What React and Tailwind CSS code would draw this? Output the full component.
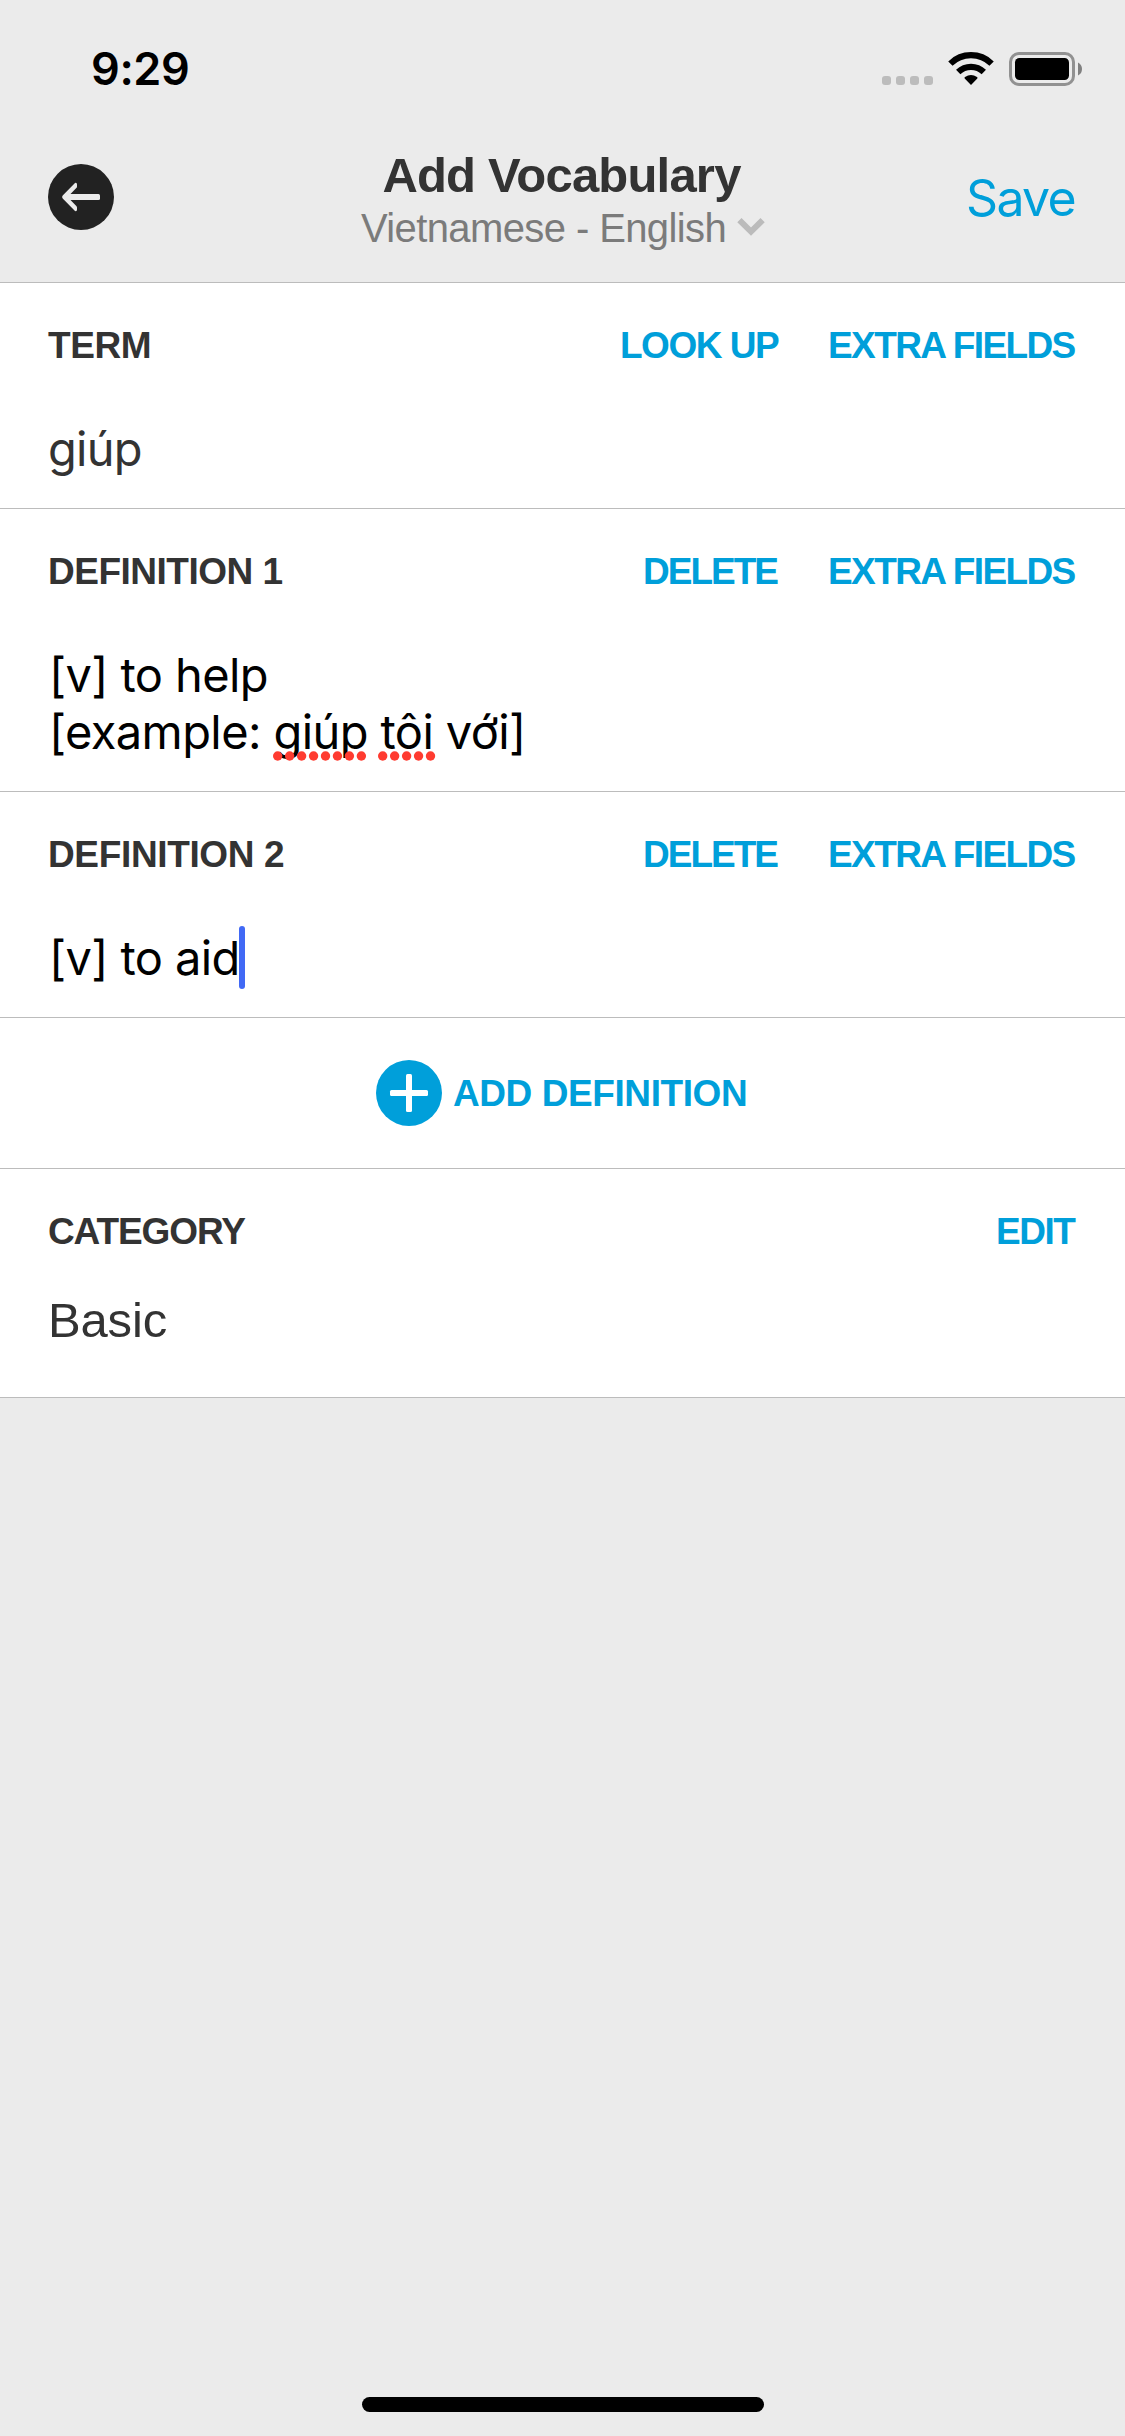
import React from "react";

const sans = "font-['Liberation_Sans',Arial,sans-serif]";

function StatusIcons() {
  return (
    <svg width="204" height="38" viewBox="880 50 204 38" className="shrink-0">
      {[882, 896, 910, 924].map((x) => (
        <rect key={x} x={x} y="76" width="9" height="9" rx="3" fill="#bcbcbc" />
      ))}
      <g fill="none" stroke="#000" strokeWidth="6.2">
        <path d="M950.4 63.6 A29.5 29.5 0 0 1 991.6 63.6" />
        <path d="M958.2 72 A18.4 18.4 0 0 1 983.8 72" />
      </g>
      <path
        d="M971 85 L964.7 78.6 Q964 77.8 965 77.1 Q971 72.7 977 77.1 Q978 77.8 977.3 78.6 Z"
        fill="#000"
      />
      <rect x="1010.5" y="53.5" width="63" height="31" rx="8.5" fill="none" stroke="#919191" strokeWidth="3" />
      <rect x="1015" y="58" width="54" height="22" rx="4.5" fill="#000" />
      <path d="M1078 62.5 Q1082 64.5 1082 69 Q1082 73.5 1078 75.5 Z" fill="#808080" />
    </svg>
  );
}

function BackButton() {
  return (
    <button aria-label="Back" className="size-[66px] shrink-0 rounded-full bg-[#222222]">
      <svg width="66" height="66" viewBox="0 0 66 66">
        <rect x="20" y="30" width="32" height="6" rx="1.5" fill="#ebebeb" />
        <path
          d="M27 19 Q29 18.3 29 20.6 V22.4 Q29 23.4 28.3 24.1 L22 30.4 V35.6 L28.3 41.9 Q29 42.6 29 43.6 V45.4 Q29 47.7 27 47 L14.7 34.5 Q13.4 33 14.7 31.5 Z"
          fill="#ebebeb"
        />
      </svg>
    </button>
  );
}

function Header() {
  return (
    <header className="h-[283px] border-b border-[#bcbcbc]">
      <div className="flex h-[96px] items-start justify-between pl-[91px] pr-[41px]">
        <span className="mt-[42px] text-[45px] font-semibold leading-[54px] tracking-[-0.4px] text-black">9:29</span>
        <div className="mt-[50px]">
          <StatusIcons />
        </div>
      </div>
      <div className="flex items-start justify-between pl-12 pr-[47px]">
        <div className="flex w-[160px] pt-[68px]">
          <BackButton />
        </div>
        <div className={`flex flex-col items-center pt-[51px] ${sans}`}>
          <h1 className="mr-[3px] whitespace-nowrap text-[49px] font-bold leading-[56px] tracking-[-0.8px] text-[#333333]">
            Add Vocabulary
          </h1>
          <div className="mt-[2px] flex text-[40px] leading-[46px] tracking-[-0.6px] text-[#7b7b7b]">
            <span className="whitespace-nowrap">Vietnamese - English</span>
            <svg width="28" height="20" viewBox="0 0 28 20" className="ml-[11px] mt-[12px]">
              <path d="M2.4 3.2 L14 14.6 L25.6 3.2" fill="none" stroke="#bbbbbb" strokeWidth="6" />
            </svg>
          </div>
        </div>
        <div className="flex w-[160px] justify-end pr-[3px] pt-[72px]">
          <button className="text-[50px] leading-[60px] tracking-[-1.7px] text-[#009fda]">Save</button>
        </div>
      </div>
    </header>
  );
}

function Section({ title, titleClass, actions, children, className }) {
  return (
    <section className={`border-b border-[#bcbcbc] bg-white pl-12 pr-12 pt-[43px] ${className}`}>
      <div className={`flex justify-between whitespace-nowrap text-[37px] font-bold leading-[40px] ${sans}`}>
        <h2 className={`text-[#333333] ${titleClass}`}>{title}</h2>
        <div className="flex text-left text-[#009fda]">{actions}</div>
      </div>
      {children}
    </section>
  );
}

const ExtraFields = () => <button className="w-[249px] text-left tracking-[-1.6px]">EXTRA FIELDS</button>;
const DeleteButton = () => <button className="w-[185px] text-left tracking-[-2px]">DELETE</button>;

function Misspelled({ dots, width, offset, children }) {
  return (
    <span className="relative">
      {children}
      <svg width={width} height="10" className={`absolute top-[48px] ${offset}`}>
        {Array.from({ length: dots }, (_, i) => (
          <circle key={i} cx={4.7 + i * 11.95} cy="5" r="4.7" fill="#ff3b30" />
        ))}
      </svg>
    </span>
  );
}

export default function App() {
  return (
    <div className="flex h-[2436px] w-[1125px] flex-col bg-[#ebebeb] font-['Inter',sans-serif]">
      <Header />
      <main>
        <Section
          title="TERM"
          titleClass="tracking-[-0.4px]"
          className="h-[226px]"
          actions={
            <>
              <button className="w-[208px] text-left tracking-[-1.5px]">LOOK UP</button>
              <ExtraFields />
            </>
          }
        >
          <p className="mt-[54px] text-[47px] leading-[57px] tracking-[-0.77px] text-[#333333]">giúp</p>
        </Section>

        <Section
          title="DEFINITION 1"
          titleClass="tracking-[-0.5px]"
          className="h-[283px]"
          actions={
            <>
              <DeleteButton />
              <ExtraFields />
            </>
          }
        >
          <p className="ml-px mt-[54px] whitespace-nowrap text-[47px] leading-[57px] tracking-[-0.6px] text-black">
            [v] to help
            <br />
            [example:{" "}
            <Misspelled dots={8} width={96} offset="-left-px">
              giúp
            </Misspelled>{" "}
            <Misspelled dots={5} width={60} offset="-left-[3px]">
              tôi
            </Misspelled>{" "}
            với]
          </p>
        </Section>

        <Section
          title="DEFINITION 2"
          titleClass="tracking-[-0.35px]"
          className="h-[226px]"
          actions={
            <>
              <DeleteButton />
              <ExtraFields />
            </>
          }
        >
          <p className="ml-px mt-[54px] whitespace-nowrap text-[47px] leading-[57px] tracking-[-0.6px] text-black">
            <span className="relative">
              [v] to aid
              <span className="absolute -right-[5px] -top-[3px] h-[63px] w-[6px] rounded-full bg-[#4169f5]" />
            </span>
          </p>
        </Section>

        <button className="flex h-[151px] w-full items-center border-b border-[#bcbcbc] bg-white pl-[376px]">
          <span className="flex size-[66px] items-center justify-center rounded-full bg-[#009fda]">
            <svg width="66" height="66" viewBox="0 0 66 66" fill="#fff">
              <rect x="14" y="30" width="38" height="6" rx="1.5" />
              <rect x="30" y="14" width="6" height="38" rx="1.5" />
            </svg>
          </span>
          <span
            className={`ml-[11px] mt-[2px] whitespace-nowrap text-[37px] font-bold leading-[40px] tracking-[-0.42px] text-[#009fda] ${sans}`}
          >
            ADD DEFINITION
          </span>
        </button>

        <Section
          title="CATEGORY"
          titleClass="tracking-[-1.1px]"
          className="h-[229px]"
          actions={<button className="w-[81px] text-left tracking-[-1.5px]">EDIT</button>}
        >
          <p className={`mt-10 text-[49px] leading-[57px] tracking-[-0.16px] text-[#333333] ${sans}`}>Basic</p>
        </Section>
      </main>
      <div className="mx-auto mb-6 mt-auto h-[15px] w-[402px] rounded-full bg-black" />
    </div>
  );
}
